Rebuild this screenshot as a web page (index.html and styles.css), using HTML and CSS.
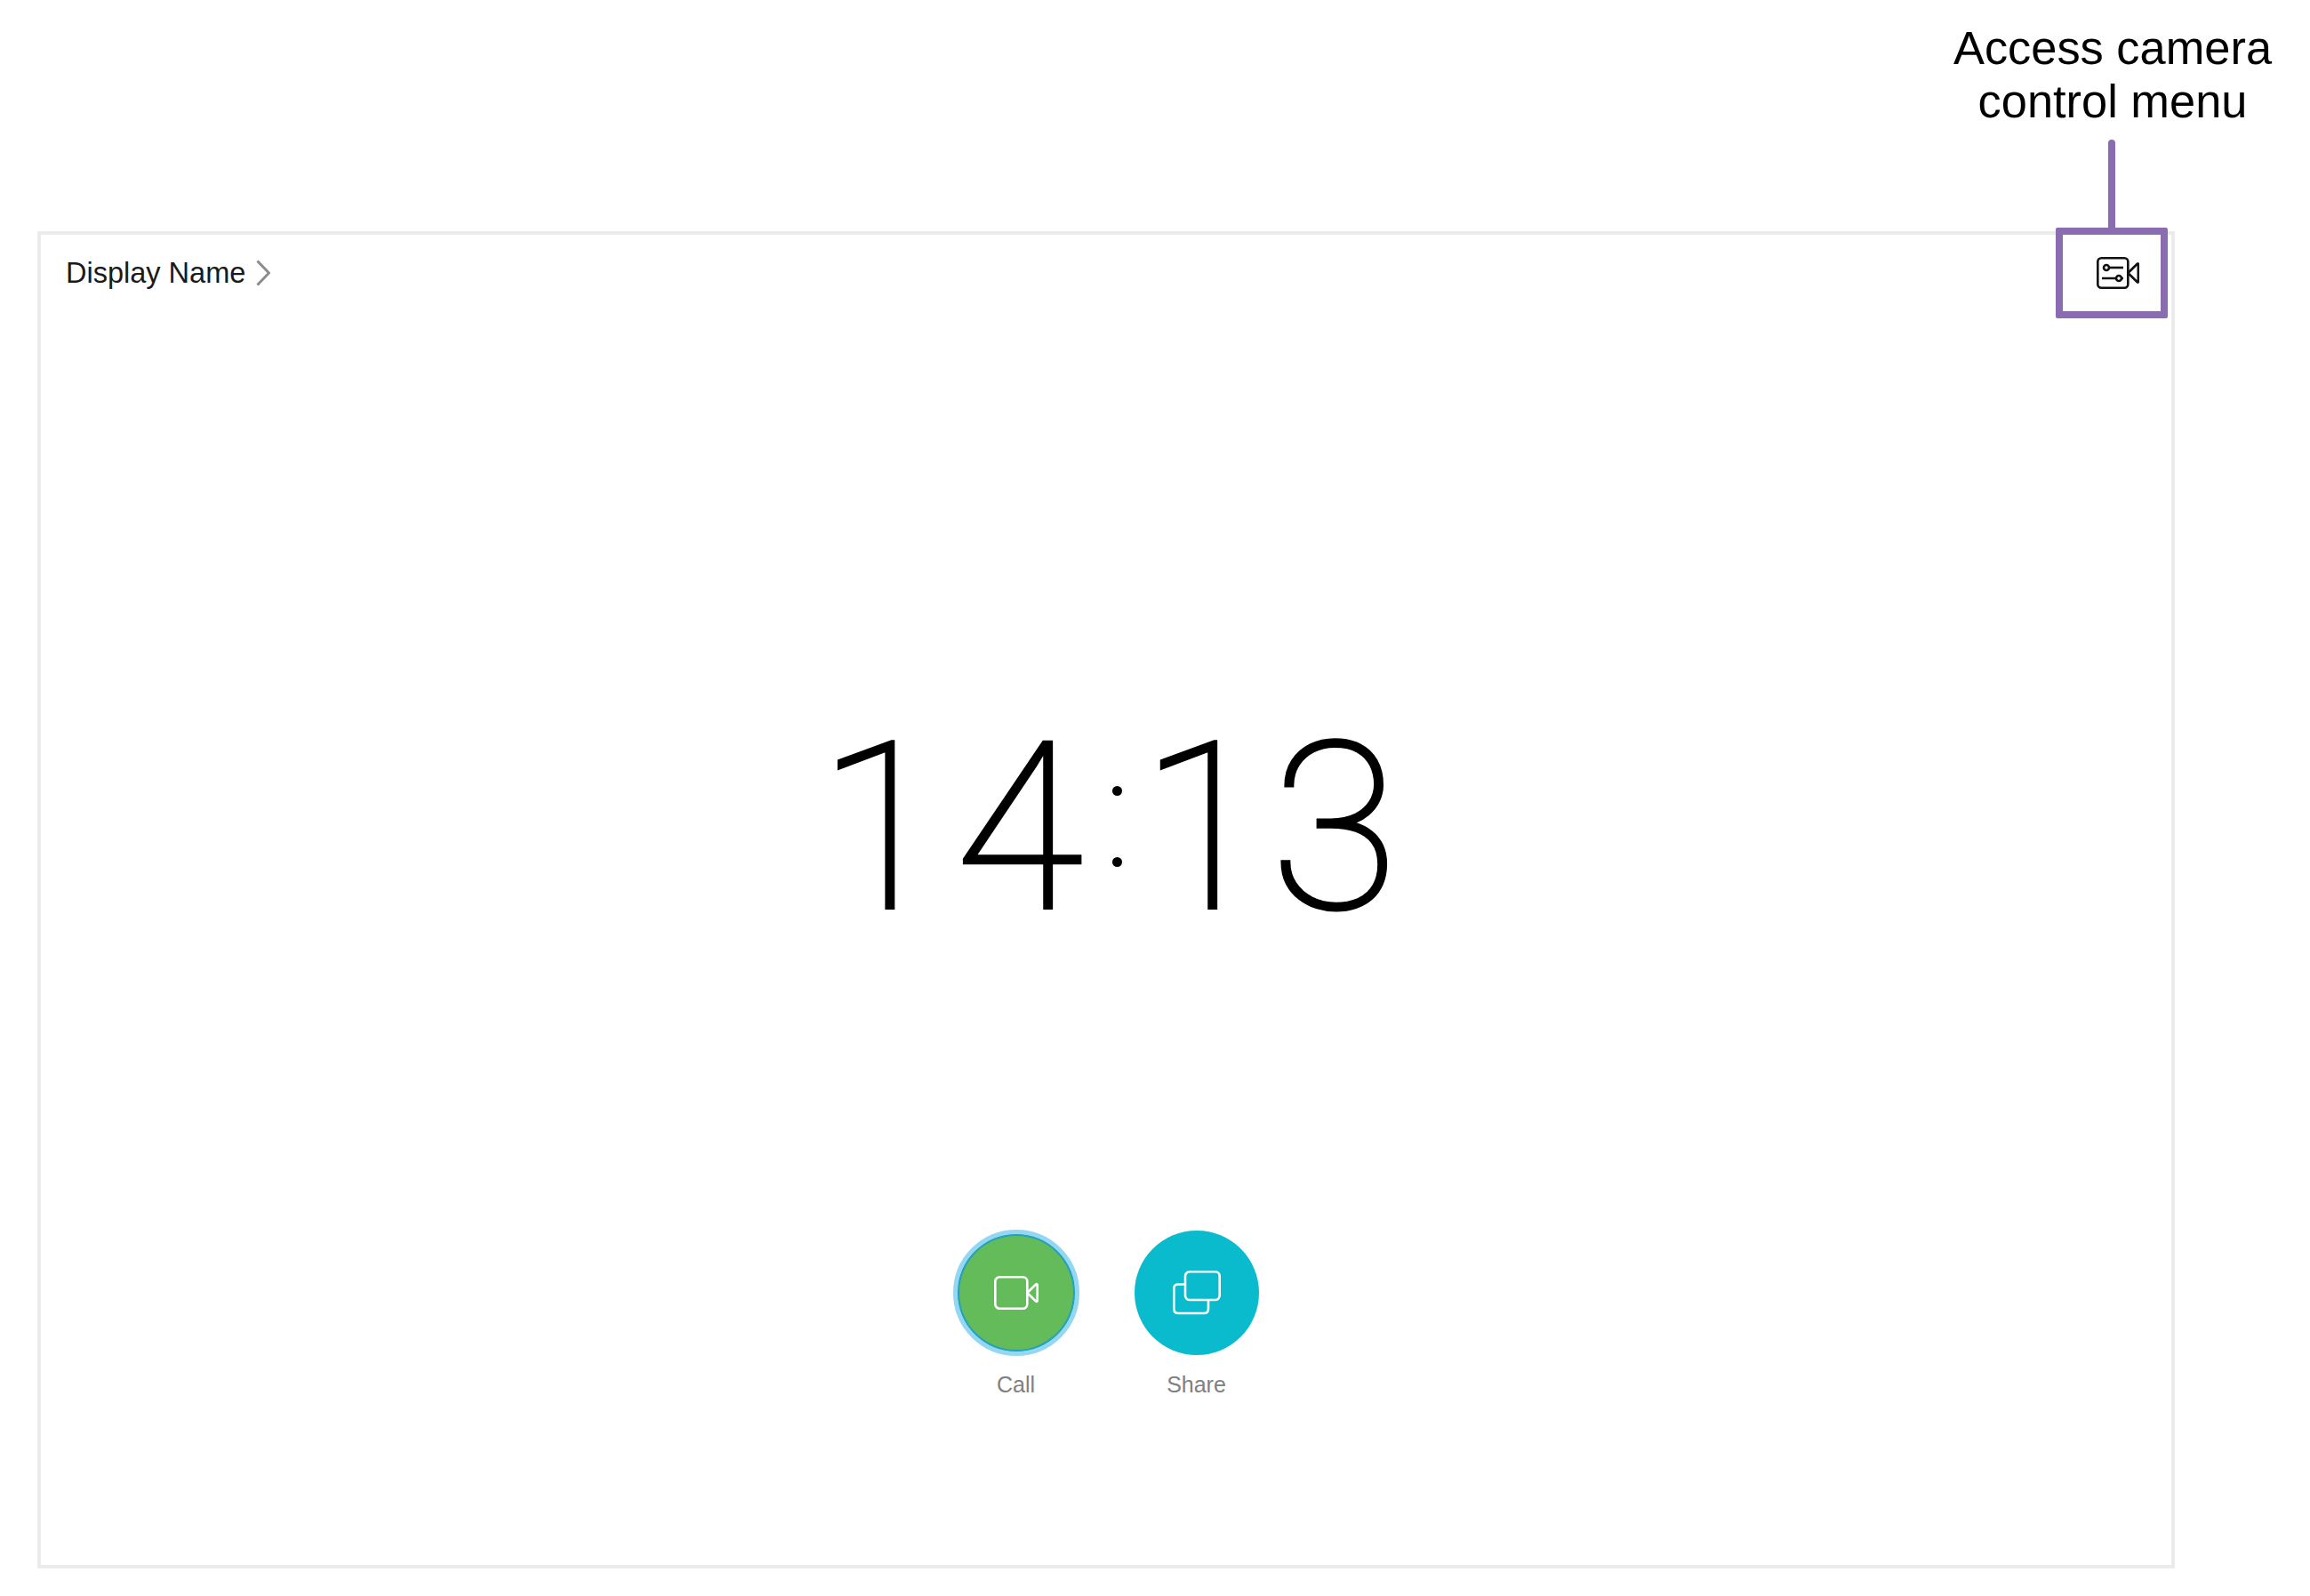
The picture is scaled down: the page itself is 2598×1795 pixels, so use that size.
FILE: index.html
```html
<!DOCTYPE html>
<html lang="en">
<head>
<meta charset="UTF-8">
<title>Access camera control menu</title>
<link rel="stylesheet" href="styles.css">
</head>
<body>

<div class="screen">
    <div class="top-bar">
        <div class="display-name">
            <span>Display Name</span>
            <svg class="chevron" width="16" height="30" viewBox="0 0 16 30">
                <path d="M1.5 1.5 L14.5 15 L1.5 28.5" fill="none" stroke="#8c8c8c" stroke-width="3"/>
            </svg>
        </div>
        <svg class="camera-control" width="48" height="36" viewBox="0 0 48 36" fill="none" stroke="#111" stroke-width="2.6">
            <rect x="1.3" y="1.3" width="34" height="33.4" rx="4"/>
            <path d="M35.3 18 L46 7.5 Q46.8 7 46.8 8.5 V27.5 Q46.8 29 46 28.5 Z" stroke-linejoin="round"/>
            <circle cx="11" cy="12" r="3"/>
            <path d="M14 12 H30"/>
            <circle cx="25" cy="24" r="3"/>
            <path d="M6 24 H22 M28 24 H30"/>
        </svg>
    </div>

    <div class="clock">
        <span class="digit">1</span>
        <span class="digit four">4</span>
        <span class="colon"><i></i><i></i></span>
        <span class="digit">1</span>
        <span class="digit three">3</span>
    </div>

    <div class="actions">
        <div class="action">
            <div class="action-btn call">
                <svg width="50" height="38" viewBox="0 0 50 38" fill="none" stroke="#fff" stroke-width="2.6" stroke-linejoin="round">
                    <rect x="1.3" y="1.3" width="36" height="35.4" rx="5"/>
                    <path d="M37.3 19 L47 9.5 Q48.7 8.5 48.7 10.5 V27.5 Q48.7 29.5 47 28.5 Z"/>
                </svg>
            </div>
            <span class="action-label">Call</span>
        </div>
        <div class="action">
            <div class="action-btn share">
                <svg width="54" height="50" viewBox="0 0 54 50" fill="none" stroke="#fff" stroke-width="2.6">
                    <path d="M14 15.5 H6 Q1.3 15.5 1.3 20 V43 Q1.3 48 6 48 H35 Q40 48 40 43 V33"/>
                    <rect x="14" y="1.3" width="38.7" height="31.7" rx="5"/>
                </svg>
            </div>
            <span class="action-label">Share</span>
        </div>
    </div>
</div>

<div class="callout">
    <p class="callout-text">Access camera<br>control menu</p>
    <div class="callout-line"></div>
    <div class="callout-box"></div>
</div>

</body>
</html>
```

FILE: styles.css
```css
body {
    margin: 0;
    background-color: #fff;
    font-family: "Liberation Sans", Arial, sans-serif;
    color: #000;
}
.screen {
    box-sizing: border-box;
    width: 2404px;
    height: 1504px;
    margin: 260px 0 0 42px;
    border: 4px solid #ebebeb;
    display: flex;
    flex-direction: column;
}
.top-bar {
    display: flex;
    justify-content: space-between;
    align-items: center;
    height: 86px;
    padding: 0 36px 0 28px;
}
.display-name {
    display: flex;
    align-items: center;
    gap: 12px;
    font-size: 32.5px;
    color: #1a1a1a;
}
.clock {
    display: flex;
    align-items: flex-start;
    margin: 487px 0 0 874px;
    height: 190px;
}
.digit {
    font-family: Roboto, sans-serif;
    font-weight: 100;
    font-size: 262px;
    line-height: 190px;
    -webkit-text-stroke: 4px #000;
}
.four {
    margin-left: 11px;
}
.three {
    margin-left: 3px;
}
.colon {
    display: flex;
    flex-direction: column;
    gap: 69px;
    margin: 47px 21px 0 33px;
}
.colon i {
    display: block;
    width: 11px;
    height: 11px;
    border-radius: 50%;
    background-color: #000;
}
.actions {
    display: flex;
    justify-content: center;
    gap: 62px;
    margin: 357px 0 0;
}
.action {
    display: flex;
    flex-direction: column;
    align-items: center;
    gap: 19px;
    width: 141px;
}
.action-btn {
    box-sizing: border-box;
    width: 140px;
    height: 140px;
    border-radius: 50%;
    display: flex;
    align-items: center;
    justify-content: center;
}
.call {
    background-color: #64bb5a;
    box-shadow: 0 0 0 1.5px #1f9fc4, 0 0 0 1px #1f9fc4 inset;
    outline: 5px solid #94d7f2;
    outline-offset: 1px;
    width: 130px;
    height: 130px;
    margin: 5px;
}
.share {
    background-color: #0abbcd;
}
.action-label {
    font-size: 25px;
    color: #808080;
}
.callout-text {
    position: absolute;
    top: 24px;
    left: 2176px;
    width: 400px;
    margin: 0;
    text-align: center;
    font-size: 52.4px;
    line-height: 60px;
}
.callout-line {
    position: absolute;
    top: 157px;
    left: 2371px;
    width: 8px;
    height: 100px;
    border-radius: 4px 4px 0 0;
    background-color: #8a6db0;
}
.callout-box {
    position: absolute;
    top: 256px;
    left: 2312px;
    box-sizing: border-box;
    width: 126px;
    height: 102px;
    border: 8px solid #8a6db0;
    border-radius: 2px;
}
```
